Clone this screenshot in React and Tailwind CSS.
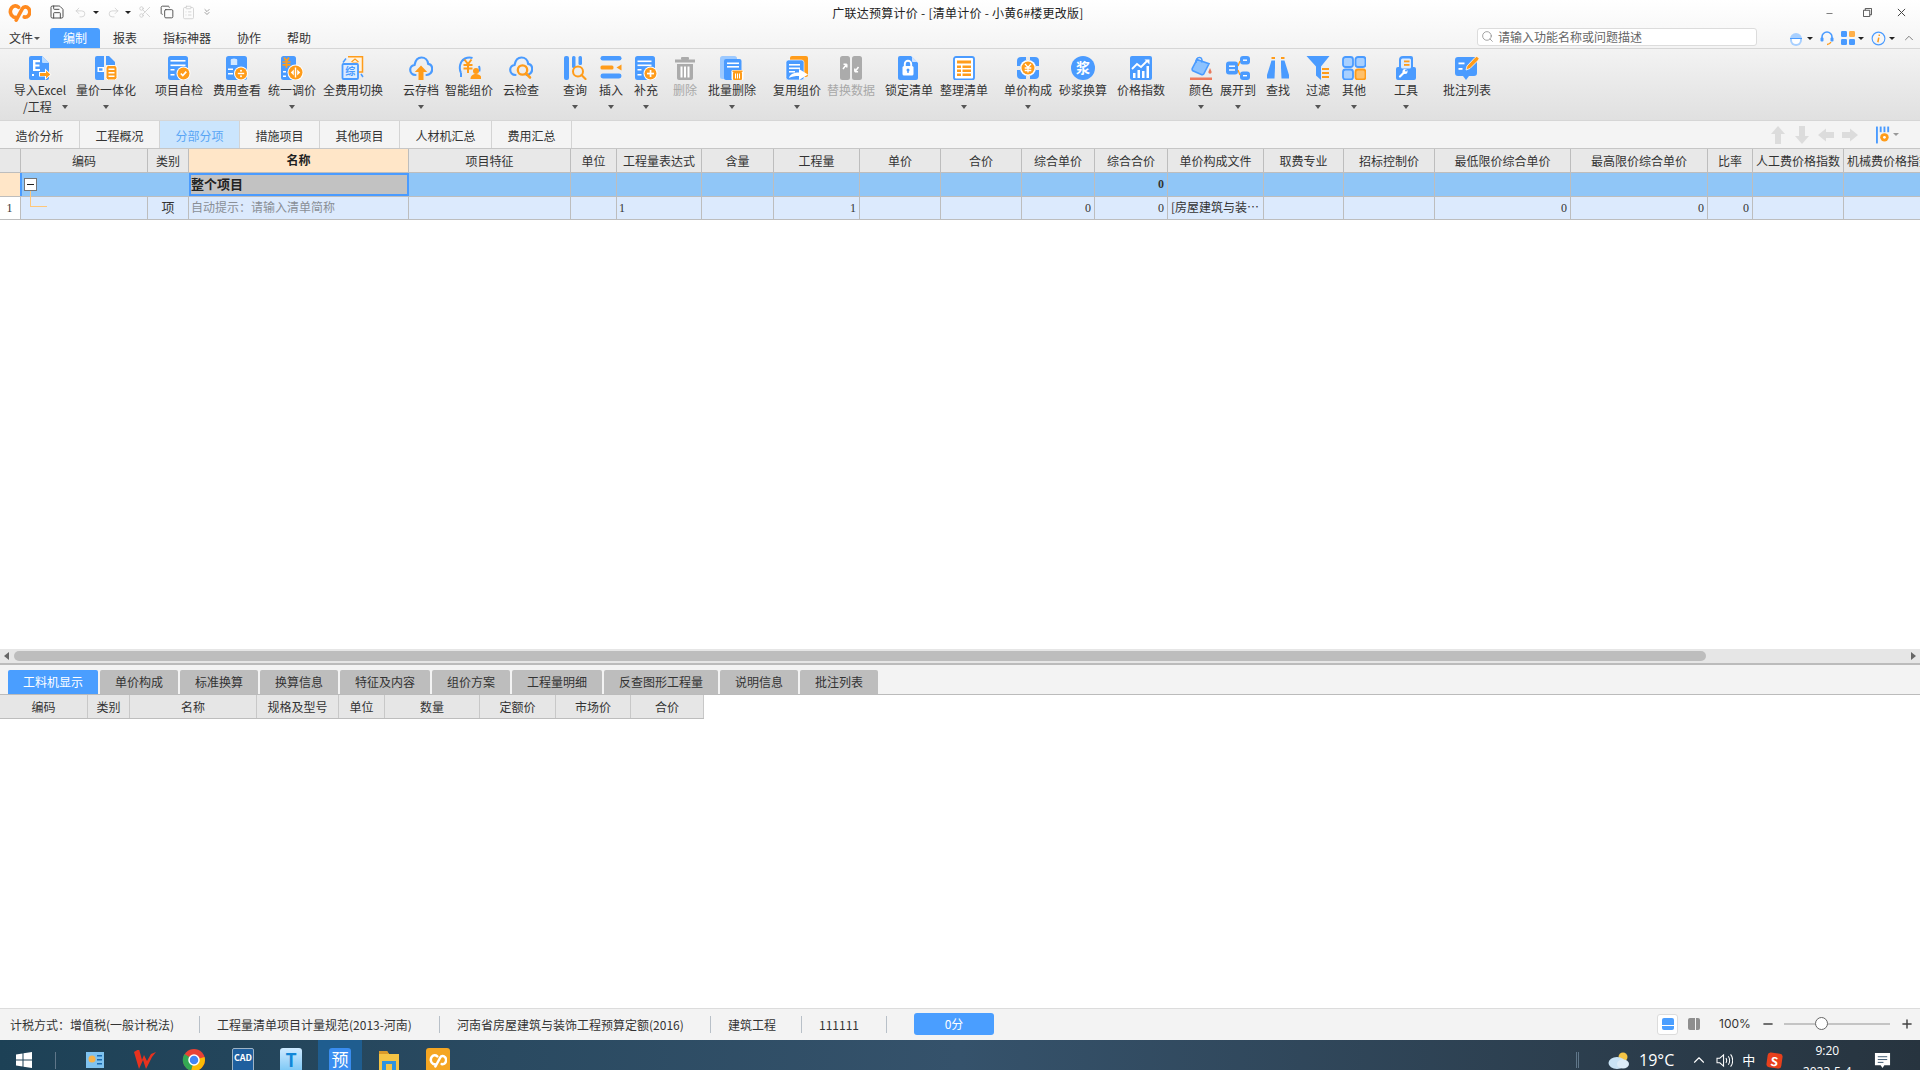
import React from 'react';
import { Save, Undo2, Redo2, Scissors, Copy, ClipboardList, ChevronsDown, Search, ChevronUp, Minus, Plus } from 'lucide-react';

const B = '#4a9bff';
const O = '#ff9c1a';
const W = '#ffffff';
const G = '#ababab';

function Lines({ x = 4, y = 5, w = 12, n = 2, c = W, gap = 4 }) {
  return Array.from({ length: n }).map((_, i) => <rect key={i} x={x} y={y + i * gap} width={w} height="1.6" fill={c} />);
}
function Badge({ cx = 17, cy = 18, r = 6, children }) {
  return (
    <g>
      <circle cx={cx} cy={cy} r={r + 1} fill={W} />
      <circle cx={cx} cy={cy} r={r} fill={O} />
      {children}
    </g>
  );
}
const FILE = 'M3 0h11l7 7v15a2 2 0 0 1-2 2H3a2 2 0 0 1-2-2V2a2 2 0 0 1 2-2z';
const CLOUD = 'M6.5 19C3.4 19 1.2 16.6 1.2 13.8c0-2.6 1.9-4.7 4.4-5C6.4 4.5 8.9 1.5 12.5 1.5c3.5 0 6.2 2.8 6.700 6.3 2.400.5 4 2.700 4 5.200 0 3.200-2.500 6-5.700 6';
const LOGO = 'M11 4.500C9 2.500 5.800 2.500 3.800 5 1.500 8 2 12.500 5.500 14.500c.8.4 1.500.5 2.200.5M8.500 18L15 6c1.300-2.300 4.600-2.600 6.500-.3 2.300 3 1.500 7.300-1.700 8.800-1 .4-1.900.5-2.800.2';

const icons = {
  excel: (<g><path d={FILE} fill={B} /><path d="M14 0l7 7h-6a1 1 0 0 1-1-1z" fill="#bcdcff" /><path d="M5 4h7v2.2H7.400v2.300H11.500v2.100H7.400v2.400H12V15H5z" fill={W} /><path d="M11 16h6v-3.500l6.500 6-6.500 5.500v-3.500h-6z" fill={W} /><path d="M12 17h6v-2.500l4.300 4-4.300 3.700V20h-6z" fill={O} /><rect x="4" y="18" width="2" height="2" fill={W} /></g>),
  liang: (<g><path d="M3 0h7v24H3a2 2 0 0 1-2-2V2a2 2 0 0 1 2-2z" fill={B} /><path d="M12 0h3l6 6v3h-9z" fill={B} /><rect x="3.500" y="11" width="6.500" height="5" fill={W} /><rect x="5" y="12.300" width="3.500" height="2.400" fill={B} /><rect x="12" y="9.500" width="11" height="14.500" rx="2.500" fill={O} stroke={W} strokeWidth="1" /><rect x="14.500" y="12.500" width="6" height="1.500" fill={W} /><rect x="14.500" y="16" width="6" height="1.500" fill={W} /><rect x="14.500" y="19.500" width="6" height="1.500" fill={W} /></g>),
  check: (<g><rect x="1" y="0" width="20" height="24" rx="2.500" fill={B} /><Lines x={3.5} y={4} w={15} n={2} gap={4.5} /><rect x="3.500" y="13" width="4" height="1.500" fill={W} /><rect x="3.500" y="18" width="4" height="1.500" fill={W} /><Badge cx={16.5} cy={17.5}><path d="M13.800 17.500l2 2 3.500-3.800" stroke={W} strokeWidth="1.700" fill="none" /></Badge></g>),
  fee: (<g><rect x="1" y="0" width="21" height="24" rx="2.500" fill={B} /><ellipse cx="9" cy="4" rx="3.200" ry="1.500" fill="#d4e8ff" /><rect x="5.800" y="4" width="6.400" height="5" fill="#d4e8ff" /><rect x="3" y="12.500" width="5" height="1.500" fill={W} /><rect x="3" y="17" width="5" height="1.500" fill={W} /><Badge cx={16} cy={17.5}><rect x="12.800" y="16.800" width="6.400" height="1.400" fill={W} /><circle cx="16" cy="14.800" r="1" fill={W} /><circle cx="16" cy="20.200" r="1" fill={W} /></Badge></g>),
  tong: (<g><rect x="1" y="0" width="15" height="24" rx="2.500" fill={B} /><path d="M4 1.500l2.500 3.500 2.500-3.500M2.500 6h8M2.500 8.800h8M6.500 5v7" stroke={O} strokeWidth="1.700" fill="none" /><rect x="3" y="15" width="3" height="1.500" fill={W} /><rect x="3" y="19.500" width="3" height="1.500" fill={W} /><Badge cx={15.5} cy={16.5} r={7}><rect x="14.800" y="11.500" width="1.400" height="10" fill={W} /><path d="M13.800 13.500v6l-3-3zM17.200 13.500v6l3-3z" fill={W} /></Badge></g>),
  quan: (<g><path d="M7 .8h14.500V16H14" fill="#fff3df" stroke={O} strokeWidth="1.500" /><path d="M10.500 6l3.500-3 3.500 3M11.500 7h5M12 9h4" stroke={O} strokeWidth="1.200" fill="none" /><rect x="1.500" y="8" width="15.500" height="15" rx="1" fill="#dcecff" stroke={B} strokeWidth="1.800" /><text x="9.200" y="19" fontSize="10" fontWeight="700" fill={B} textAnchor="middle" fontFamily="Noto Sans CJK SC">综</text><path d="M2 6.500l3-4M20 18l2 3" stroke={B} strokeWidth="1.500" /></g>),
  cloudup: (<g><path d={CLOUD} fill="none" stroke={B} strokeWidth="2.200" strokeLinecap="round" /><path d="M12 9.500l6.200 6.500h-3.700v8h-5v-8H5.800z" fill={O} /></g>),
  smart: (<g><path d="M4 17C1.500 12 3 5 8 2.500 10 1.500 13 1 15.500 2M22 10c.7 2 .7 4 .2 5.500" fill="none" stroke={B} strokeWidth="2" /><path d="M4 17v4M8 4l-3 0" stroke={B} strokeWidth="2" /><path d="M7.500 3.500L11 8l3.500-4.500M6.500 9h9M6.500 12.500h9M11 8v9" stroke={O} strokeWidth="2" fill="none" /><circle cx="19" cy="15" r="3" fill={O} /><path d="M13.500 23c0-3.500 2.500-5 5.500-5s5.500 1.500 5.500 5z" fill={O} /></g>),
  cloudq: (<g><path d={CLOUD} fill="none" stroke={B} strokeWidth="2.200" strokeLinecap="round" /><circle cx="13.500" cy="14" r="4.700" fill="none" stroke={O} strokeWidth="2.300" /><path d="M17 17.500l4 4" stroke={O} strokeWidth="2.500" strokeLinecap="round" /></g>),
  query: (<g><rect x="1" y="0" width="5" height="24" rx="2" fill={B} /><rect x="9" y="0" width="3.500" height="12" rx="1.500" fill={B} /><rect x="15.500" y="0" width="3.500" height="9" rx="1.500" fill={B} /><circle cx="15" cy="15.500" r="5" fill="none" stroke={O} strokeWidth="2" /><path d="M18.500 19l4 4" stroke={O} strokeWidth="2.200" strokeLinecap="round" /></g>),
  insert: (<g><rect x="1.500" y="0" width="21" height="4.500" rx="2.200" fill={B} /><rect x="1.500" y="9.500" width="13" height="4" rx="1.500" fill={O} /><path d="M22.500 8.500v6l-5-3z" fill={O} /><rect x="1.500" y="17.500" width="21" height="5" rx="2.400" fill={B} /></g>),
  add: (<g><rect x="1" y="0" width="20" height="24" rx="2.500" fill={B} /><Lines x={3.5} y={4.5} w={14} n={2} gap={4} /><rect x="3.500" y="13" width="4" height="1.500" fill={W} /><rect x="3.500" y="18" width="4" height="1.500" fill={W} /><Badge cx={16.5} cy={17.5}><rect x="13" y="16.700" width="7" height="1.700" fill={W} /><rect x="15.700" y="14" width="1.700" height="7" fill={W} /></Badge></g>),
  trash: (<g><path d="M2 3.500h20v3H2z" fill={G} /><rect x="8" y="1" width="8" height="3" rx="1" fill={G} /><path d="M4 8h16v14a2 2 0 0 1-2 2H6a2 2 0 0 1-2-2z" fill={G} /><rect x="7.500" y="10.500" width="2" height="11" fill={W} /><rect x="11" y="10.500" width="2" height="11" fill={W} /><rect x="14.500" y="10.500" width="2" height="11" fill={W} /></g>),
  batch: (<g><rect x="0" y="0" width="17" height="23" rx="2.500" fill="#9cc9ff" /><rect x="4" y="3" width="17.500" height="21" rx="2" fill={B} /><Lines x={7} y={6.5} w={12} n={2} gap={3.5} /><rect x="11.500" y="14" width="12" height="10" rx="1.200" fill={W} /><rect x="13" y="16" width="9" height="8" rx="1" fill={O} /><rect x="12.500" y="14.500" width="10" height="1.500" fill={O} /><rect x="15" y="17.500" width="1" height="5" fill={W} /><rect x="17" y="17.500" width="1" height="5" fill={W} /><rect x="19" y="17.500" width="1" height="5" fill={W} /></g>),
  reuse: (<g><rect x="5" y="0" width="18" height="21" rx="2" fill={O} /><rect x="1" y="4" width="18" height="20" rx="2.500" fill={B} stroke={W} strokeWidth=".6" /><Lines x={4} y={8} w={11} n={2} gap={3.5} /><rect x="4" y="15" width="6" height="1.500" fill={W} /><path d="M4 22c1-4 5-5.500 10-5.500V13l9 5.500-9 5.500v-4c-4 0-7 .5-10 2z" fill={W} /></g>),
  replace: (<g><rect x="1" y="0" width="10" height="24" rx="2.500" fill={G} /><rect x="13" y="0" width="10" height="24" rx="2.500" fill={G} /><path d="M4 13l3-4M7.800 8.200v3.300M7.800 8.200H4.500" stroke={W} strokeWidth="1.500" fill="none" /><path d="M19.500 11l-3 4M15.800 15.800v-3.300M15.800 15.800h3.300" stroke={W} strokeWidth="1.500" fill="none" /></g>),
  lock: (<g><path d={FILE} fill={B} /><path d="M15 .5l5.500 5.500H16a1 1 0 0 1-1-1z" fill="#cfe3ff" /><rect x="5.500" y="10" width="11" height="9.500" rx="1.500" fill={W} /><path d="M7.800 10V8a3.200 3.200 0 0 1 6.400 0v2" fill="none" stroke={W} strokeWidth="1.900" /><circle cx="11" cy="14" r="1.500" fill={B} /><rect x="10.300" y="14" width="1.400" height="3" fill={B} /></g>),
  organize: (<g><rect x="2" y="1" width="20" height="22.500" rx="2" fill={W} stroke={B} strokeWidth="1.900" /><rect x="5" y="4.500" width="14" height="3" fill={O} /><rect x="5" y="9.500" width="4" height="2.500" fill={O} /><rect x="10.500" y="9.500" width="8.500" height="2.500" fill={O} /><rect x="5" y="13.500" width="4" height="2.500" fill={O} /><rect x="10.500" y="13.500" width="8.500" height="2.500" fill={O} /><rect x="5" y="17.500" width="4" height="2.500" fill={O} /><rect x="10.500" y="17.500" width="8.500" height="2.500" fill={O} /></g>),
  unit: (<g><rect x="1" y="1" width="22" height="22" rx="4" fill={B} /><path d="M10 1h4v3h-4zM1 10h3v4H1zM20 10h3v4h-3zM10 20h4v3h-4z" fill="#eaeaea" /><circle cx="12" cy="12" r="8" fill={W} /><circle cx="12" cy="12" r="6.500" fill={O} /><path d="M9 7.800l3 3.700 3-3.700M8.700 12h6.600M8.700 14.500h6.600M12 11.500v5" stroke={W} strokeWidth="1.300" fill="none" /></g>),
  mortar: (<g><circle cx="12" cy="12" r="12" fill={B} /><text x="12" y="17" fontSize="14" fontWeight="700" fill={W} textAnchor="middle" fontFamily="Noto Sans CJK SC">浆</text></g>),
  price: (<g><rect x="1" y="0" width="22" height="24" rx="2" fill={B} /><path d="M3 13l5-5 4 3 6-6" fill="none" stroke={W} strokeWidth="1.800" /><path d="M15.500 3.500h5v5z" fill={W} /><rect x="4" y="17" width="2.500" height="5" fill={W} /><rect x="8.500" y="14" width="2.500" height="8" fill={W} /><rect x="13" y="15" width="2.500" height="7" fill={W} /><rect x="17.500" y="10" width="2.500" height="12" fill={W} /></g>),
  color: (<g><path d="M8 3.500L20 7.800 15 17.500a2 2 0 0 1-2.700 1L4.300 15a2 2 0 0 1-1-2.700z" fill="#8cc2ff" stroke={B} strokeWidth="1.600" /><path d="M7 7c-.5-3 1-5.500 3.500-5.500s3 3 2 5" fill="none" stroke={B} strokeWidth="1.500" /><path d="M21 12l1.500 3.500a1.600 1.600 0 1 1-3 0z" fill="#e87b5e" /><rect x="1" y="21.500" width="22" height="2.500" fill="#ee7a5c" /></g>),
  expand: (<g><rect x="0" y="5.500" width="12" height="13" rx="3" fill={B} /><rect x="3" y="9.500" width="6" height="1.400" fill={W} /><rect x="3" y="13.300" width="6" height="1.400" fill={W} /><rect x="14" y="0" width="10" height="8.500" rx="3" fill={B} /><rect x="17" y="3.500" width="4" height="1.400" fill={W} /><rect x="14" y="15.500" width="10" height="8.500" rx="3" fill={B} /><rect x="17" y="19" width="4" height="1.400" fill={W} /><path d="M12 10l2-5M12 14l2 5" stroke={O} strokeWidth="1.300" /></g>),
  find: (<g><rect x="5.500" y="1" width="3.500" height="2" fill={O} /><rect x="15" y="1" width="3.500" height="2" fill={O} /><path d="M5.500 4.500H9V12L8.500 22.500H1V19z" fill={B} /><path d="M15 4.500h3.500L23 19v3.500h-7.500L15 12z" fill={B} /></g>),
  filter: (<g><path d="M.5 0h23l-8.500 10.500V24l-5-4.500v-9z" fill={B} /><rect x="16" y="12" width="7" height="2" fill={O} /><rect x="16" y="16" width="7" height="2" fill={O} /><rect x="16" y="20" width="7" height="2" fill={O} /></g>),
  other: (<g><rect x="1" y="1" width="10" height="10" rx="2.500" fill="#a8d0ff" stroke={B} strokeWidth="1.800" /><rect x="13.500" y="1" width="10" height="10" rx="2.500" fill="#a8d0ff" stroke={B} strokeWidth="1.800" /><rect x="1" y="13.500" width="10" height="10" rx="2.500" fill="#a8d0ff" stroke={B} strokeWidth="1.800" /><rect x="13.500" y="13.500" width="10" height="10" rx="2.500" fill="#ffc06a" stroke={O} strokeWidth="1.800" /></g>),
  tool: (<g><path d="M9 0h8a2 2 0 0 1 2 2v9h1a2 2 0 0 1 2 2v9a2 2 0 0 1-2 2H4a2 2 0 0 1-2-2V13a2 2 0 0 1 2-2h1V4a4 4 0 0 1 4-4z" fill={B} /><rect x="7" y="2.500" width="10" height="10" rx="1.500" fill="#dcecff" /><rect x="10" y="4.500" width="5.500" height="1.800" fill={O} /><rect x="10" y="8" width="5.500" height="1.800" fill={O} /><path d="M6 20.500l4-4" stroke={W} strokeWidth="2.200" strokeLinecap="round" /><circle cx="11" cy="15.500" r="2.500" fill={W} /><circle cx="12" cy="14.500" r="1" fill={B} /></g>),
  note: (<g><path d="M3 1h16a3 3 0 0 1 3 3v13a3 3 0 0 1-3 3h-5l-3 4-3-4H3a3 3 0 0 1-3-3V4a3 3 0 0 1 3-3z" fill={B} /><rect x="3.500" y="6.500" width="6" height="1.800" fill={W} /><rect x="3.500" y="12" width="4" height="1.800" fill={W} /><path d="M11 14l1-4L20 1.500a1.800 1.800 0 0 1 3.500 2.500L15 12.500z" fill={O} stroke={W} strokeWidth=".8" /></g>),
};

function Ico({ name }) {
  return <svg viewBox="0 0 24 24" className="w-[24px] h-[24px] block">{icons[name]}</svg>;
}
function Caret({ className = '' }) {
  return <span className={`block w-0 h-0 border-x-[3px] border-x-transparent border-t-[4px] border-t-[#555] ${className}`} />;
}

const tools = [
  { i: 'excel', t: '导入Excel', c: 'w-[60px] ml-[10px]', sub: '/工程', caret: 1 },
  { i: 'liang', t: '量价一体化', c: 'w-[62px] ml-[5px]', caret: 1 },
  { i: 'check', t: '项目自检', c: 'w-[50px] ml-[17px]' },
  { i: 'fee', t: '费用查看', c: 'w-[50px] ml-[8px]' },
  { i: 'tong', t: '统一调价', c: 'w-[50px] ml-[5px]', caret: 1 },
  { i: 'quan', t: '全费用切换', c: 'w-[62px] ml-[5px]' },
  { i: 'cloudup', t: '云存档', c: 'w-[38px] ml-[18px]', caret: 1 },
  { i: 'smart', t: '智能组价', c: 'w-[50px] ml-[4px]' },
  { i: 'cloudq', t: '云检查', c: 'w-[38px] ml-[8px]' },
  { i: 'query', t: '查询', c: 'w-[28px] ml-[21px]', caret: 1 },
  { i: 'insert', t: '插入', c: 'w-[28px] ml-[8px]', caret: 1 },
  { i: 'add', t: '补充', c: 'w-[28px] ml-[7px]', caret: 1 },
  { i: 'trash', t: '删除', c: 'w-[28px] ml-[11px]', dim: 1 },
  { i: 'batch', t: '批量删除', c: 'w-[50px] ml-[8px]', caret: 1 },
  { i: 'reuse', t: '复用组价', c: 'w-[50px] ml-[15px]', caret: 1 },
  { i: 'replace', t: '替换数据', c: 'w-[50px] ml-[4px]', dim: 1 },
  { i: 'lock', t: '锁定清单', c: 'w-[50px] ml-[8px]' },
  { i: 'organize', t: '整理清单', c: 'w-[50px] ml-[5px]', caret: 1 },
  { i: 'unit', t: '单价构成', c: 'w-[50px] ml-[14px]', caret: 1 },
  { i: 'mortar', t: '砂浆换算', c: 'w-[50px] ml-[5px]' },
  { i: 'price', t: '价格指数', c: 'w-[50px] ml-[8px]' },
  { i: 'color', t: '颜色', c: 'w-[28px] ml-[21px]', caret: 1 },
  { i: 'expand', t: '展开到', c: 'w-[38px] ml-[4px]', caret: 1 },
  { i: 'find', t: '查找', c: 'w-[28px] ml-[7px]' },
  { i: 'filter', t: '过滤', c: 'w-[28px] ml-[12px]', caret: 1 },
  { i: 'other', t: '其他', c: 'w-[28px] ml-[8px]', caret: 1 },
  { i: 'tool', t: '工具', c: 'w-[28px] ml-[24px]', caret: 1 },
  { i: 'note', t: '批注列表', c: 'w-[50px] ml-[22px]' },
];

const cols = [
  { w: 'w-[21px]', h: '' },
  { w: 'w-[127px]', h: '编码' },
  { w: 'w-[41px]', h: '类别' },
  { w: 'w-[220px]', h: '名称' },
  { w: 'w-[162px]', h: '项目特征' },
  { w: 'w-[46px]', h: '单位' },
  { w: 'w-[85px]', h: '工程量表达式' },
  { w: 'w-[72px]', h: '含量' },
  { w: 'w-[86px]', h: '工程量' },
  { w: 'w-[81px]', h: '单价' },
  { w: 'w-[81px]', h: '合价' },
  { w: 'w-[73px]', h: '综合单价' },
  { w: 'w-[73px]', h: '综合合价' },
  { w: 'w-[96px]', h: '单价构成文件' },
  { w: 'w-[80px]', h: '取费专业' },
  { w: 'w-[91px]', h: '招标控制价' },
  { w: 'w-[136px]', h: '最低限价综合单价' },
  { w: 'w-[137px]', h: '最高限价综合单价' },
  { w: 'w-[45px]', h: '比率' },
  { w: 'w-[91px]', h: '人工费价格指数' },
  { w: 'w-[91px]', h: '机械费价格指数' },
];

const subCols = [
  ['w-[88px]', '编码'], ['w-[42px]', '类别'], ['w-[127px]', '名称'], ['w-[82px]', '规格及型号'], ['w-[46px]', '单位'],
  ['w-[95px]', '数量'], ['w-[76px]', '定额价'], ['w-[75px]', '市场价'], ['w-[73px]', '合价'],
];

const row2 = { 8: '1', 11: '0', 12: '0', 16: '0', 17: '0', 18: '0' };
const mono = "font-[family-name:'Liberation_Serif',serif]";

const topTabs = [['造价分析', 'w-[80px]'], ['工程概况', 'w-[80px]'], ['分部分项', 'w-[80px]'], ['措施项目', 'w-[80px]'], ['其他项目', 'w-[80px]'], ['人材机汇总', 'w-[92px]'], ['费用汇总', 'w-[80px]']];
const botTabs = [['工料机显示', 'w-[90px]'], ['单价构成', 'w-[78px]'], ['标准换算', 'w-[78px]'], ['换算信息', 'w-[78px]'], ['特征及内容', 'w-[90px]'], ['组价方案', 'w-[78px]'], ['工程量明细', 'w-[90px]'], ['反查图形工程量', 'w-[114px]'], ['说明信息', 'w-[78px]'], ['批注列表', 'w-[78px]']];

function MiniCaret({ c = 'border-t-[#222]' }) {
  return <span className={`block w-0 h-0 border-x-[3px] border-x-transparent border-t-[3px] ${c}`} />;
}

export default function App() {
  return (
    <div className="w-[1920px] h-[1070px] overflow-hidden flex flex-col bg-white text-[12px] text-[#333] font-[family-name:'Noto_Sans_CJK_SC','Liberation_Sans',sans-serif]">
      {/* title bar */}
      <div className="h-[48px] shrink-0 bg-gradient-to-b from-white to-[#f4f4f4] flex flex-col">
        <div className="h-[28px] pb-[4px] flex items-center relative">
          <svg viewBox="0 0 24 20" className="w-[23px] h-[19px] ml-[8px]">
            <path d={LOGO} fill="none" stroke="#ff8a1f" strokeWidth="3.800" strokeLinecap="round" />
          </svg>
          <Save size={16} strokeWidth={1.4} className="ml-[18px] text-[#444]" />
          <Undo2 size={13} strokeWidth={1.4} className="ml-[9px] text-[#ccc]" />
          <span className="ml-[6px]"><MiniCaret /></span>
          <Redo2 size={13} strokeWidth={1.4} className="ml-[8px] text-[#ccc]" />
          <span className="ml-[5px]"><MiniCaret /></span>
          <Scissors size={14} strokeWidth={1.4} className="ml-[7px] text-[#ccc]" />
          <Copy size={14} strokeWidth={1.5} className="ml-[8px] text-[#444]" />
          <ClipboardList size={15} strokeWidth={1.3} className="ml-[7px] text-[#ccc]" />
          <ChevronsDown size={10} strokeWidth={1.5} className="ml-[6px] text-[#666]" />
          <div className="absolute left-[821px] top-[3px] w-[274px] text-center leading-[20px] whitespace-nowrap text-[#222] tracking-[0.25px]">广联达预算计价 - [清单计价 - 小黄6#楼更改版]</div>
          <div className="ml-auto flex items-center text-[#333]">
            <Minus size={9} strokeWidth={2} className="mr-[29px] mt-[2px] text-[#555]" />
            <svg viewBox="0 0 10 10" className="w-[9px] h-[9px] mr-[25px] text-[#444]"><path d="M2.500 2.500V.5h7v7h-2M.5 2.500h7v7h-7z" fill="none" stroke="currentColor" /></svg>
            <svg viewBox="0 0 10 10" className="w-[9px] h-[9px] mr-[14px] text-[#444]"><path d="M1 1l8 8M9 1l-8 8" stroke="currentColor" strokeWidth="1.100" /></svg>
          </div>
        </div>
        <div className="h-[20px] flex items-stretch relative text-[12px]">
          <div className="ml-[9px] w-[41px] flex items-center">文件<span className="ml-[1px]"><MiniCaret c="border-t-[#555]" /></span></div>
          <div className="w-[50px] flex items-center justify-center bg-[#4a9eff] text-white rounded-t-[3px]">编制</div>
          <div className="ml-[13px] w-[24px] flex items-center justify-center">报表</div>
          <div className="ml-[26px] w-[48px] flex items-center justify-center">指标神器</div>
          <div className="ml-[26px] w-[24px] flex items-center justify-center">协作</div>
          <div className="ml-[26px] w-[24px] flex items-center justify-center">帮助</div>
          <div className="ml-auto flex items-center mr-[4px]">
            <div className="w-[280px] h-[18px] mr-[31px] mb-[3px] bg-white border border-[#dcdcdc] rounded-[3px] flex items-center pl-[3px] text-[#666]">
              <Search size={13} strokeWidth={1.4} className="text-[#888]" />
              <span className="ml-[4px]">请输入功能名称或问题描述</span>
            </div>
            <svg viewBox="0 0 16 16" className="w-[16px] h-[16px]"><path d="M2 9a6 6 0 0 1 12 0v1a5 5 0 0 1-12 0z" fill="#a8d0ff" /><path d="M4 8h8v2a4 4 0 0 1-8 0z" fill="#fff" /><path d="M2 8.500h12" stroke="#4a9bff" /></svg>
            <span className="ml-[3px]"><MiniCaret /></span>
            <svg viewBox="0 0 16 16" className="w-[16px] h-[16px] ml-[6px]"><path d="M3 9V7a5 5 0 0 1 10 0v2" fill="none" stroke="#4a9bff" strokeWidth="1.600" /><rect x="1.500" y="7.500" width="3" height="4" rx="1" fill="#4a9bff" /><rect x="11.500" y="7.500" width="3" height="4" rx="1" fill="#4a9bff" /><path d="M12 12c-1 2-2 2.500-4 2.500" fill="none" stroke="#ff9c1a" strokeWidth="1.300" /></svg>
            <svg viewBox="0 0 14 14" className="w-[14px] h-[14px] ml-[6px]"><rect x="0" y="0" width="6" height="6" rx="1.200" fill="#4a9bff" /><rect x="8" y="0" width="6" height="6" rx="1.200" fill="#ffb04a" /><rect x="0" y="8" width="6" height="6" rx="1.200" fill="#4a9bff" /><rect x="8" y="8" width="6" height="6" rx="1.200" fill="#4a9bff" /></svg>
            <span className="ml-[3px]"><MiniCaret /></span>
            <svg viewBox="0 0 16 16" className="w-[15px] h-[15px] ml-[7px]"><circle cx="8" cy="8" r="6.800" fill="none" stroke="#4a9bff" strokeWidth="1.200" /><path d="M8.800 3.800v1.500M8.300 7L7.300 12" stroke="#ff9c1a" strokeWidth="1.600" /></svg>
            <span className="ml-[3px]"><MiniCaret /></span>
            <ChevronUp size={14} strokeWidth={1.6} className="ml-[7px] text-[#777]" />
          </div>
        </div>
      </div>

      {/* toolbar */}
      <div className="h-[73px] shrink-0 bg-gradient-to-b from-[#f3f3f3] to-[#e0e0e0] border-y border-[#d6d6d6] flex items-start pt-[7px]">
        {tools.map((x) => (
          <div key={x.t} className={`${x.c} shrink-0 flex flex-col items-center`}>
            <Ico name={x.i} />
            <div className={`mt-[1px] leading-[18px] whitespace-nowrap ${x.dim ? 'text-[#a8a8a8]' : 'text-[#333]'}`}>{x.t}</div>
            {x.sub ? (
              <div className="self-start pl-[13px] -mt-[1px] leading-[18px] flex items-center whitespace-nowrap">{x.sub}<Caret className="ml-[10px]" /></div>
            ) : x.caret ? (
              <Caret className="mt-[6px]" />
            ) : null}
          </div>
        ))}
      </div>

      {/* top tabs */}
      <div className="h-[27px] shrink-0 bg-[#f4f4f4] flex items-stretch">
        {topTabs.map(([t, w]) => (
          <div key={t} className={`${w} flex items-center justify-center pt-[2px] border-r border-[#d4d4d4] ${t === '分部分项' ? 'bg-[#cbe5fd] text-[#5aa5f5]' : ''}`}>{t}</div>
        ))}
        <div className="ml-auto flex items-center">
          <svg viewBox="0 0 14 18" className="w-[14px] h-[18px] mr-[10px]"><path d="M7 0l7 8H10v10H4V8H0z" fill="#dcdcdc" /></svg>
          <svg viewBox="0 0 14 18" className="w-[14px] h-[18px] mr-[9px]"><path d="M7 18l7-8H10V0H4v10H0z" fill="#dcdcdc" /></svg>
          <svg viewBox="0 0 16 14" className="w-[16px] h-[14px] mr-[8px]"><path d="M0 7l8-6.500V4h8v6H8v3.500z" fill="#dcdcdc" /></svg>
          <svg viewBox="0 0 16 14" className="w-[16px] h-[14px] mr-[18px]"><path d="M16 7L8 .5V4H0v6h8v3.500z" fill="#dcdcdc" /></svg>
          <svg viewBox="0 0 16 18" className="w-[15px] h-[18px]"><rect x="0" y="0" width="2" height="18" fill="#4a9bff" /><rect x="4" y="0" width="2" height="6" fill="#4a9bff" /><rect x="8" y="0" width="2" height="6" fill="#4a9bff" /><rect x="12" y="0" width="2" height="6" fill="#4a9bff" /><circle cx="9" cy="11.500" r="4.500" fill="#ff9c1a" /><circle cx="9" cy="11.500" r="1.500" fill="#fff" /></svg>
          <span className="ml-[2px] mr-[21px]"><MiniCaret c="border-t-[#999]" /></span>
        </div>
      </div>

      {/* main table */}
      <div className="shrink-0 border-t border-[#c6c6c6] overflow-hidden text-[#333]">
        <div className="flex h-[24px] border-b border-[#bdbdbd]">
          {cols.map((c, i) => (
            <div key={i} className={`${c.w} shrink-0 border-r border-[#bdbdbd] flex items-center justify-center whitespace-nowrap overflow-hidden ${i === 3 ? 'bg-[#ffe6c8] font-bold text-[#222] pb-[2px]' : 'bg-[#e8e8e8]'}`}>{c.h}</div>
          ))}
        </div>
        <div className="flex h-[24px] border-b border-[#bdbdbd] bg-[#90c6f7]">
          {cols.map((c, i) => {
            if (i === 0) return <div key={i} className="w-[22px] shrink-0 bg-[#ffe6c8] border-r-2 border-[#4a9bff]" />;
            if (i === 1) return (
              <div key={i} className="w-[126px] shrink-0 flex items-center pl-[2px] relative">
                <span className="w-[13px] h-[13px] bg-white border border-[#777] flex items-center justify-center"><span className="block w-[7px] h-[1px] bg-[#222]" /></span>
                <span className="absolute left-[8px] top-[18px] w-[1px] h-[6px] bg-[#ffc77a]" />
              </div>
            );
            if (i === 3) return <div key={i} className={`${c.w} shrink-0 bg-[#c2c2c2] border-2 border-[#4a9bff] flex items-center pb-[2px] font-bold text-[13px] text-[#222]`}>整个项目</div>;
            if (i === 12) return <div key={i} className={`${c.w} shrink-0 border-r border-[#bdbdbd] flex items-center justify-end pr-[3px] pb-[1px] font-bold ${mono}`}>0</div>;
            if (i === 2) return <div key={i} className={`${c.w} shrink-0`} />;
            return <div key={i} className={`${c.w} shrink-0 border-r border-[#bdbdbd]`} />;
          })}
        </div>
        <div className="flex h-[23px] border-b border-[#bdbdbd] bg-[#dceafd]">
          {cols.map((c, i) => {
            if (i === 0) return <div key={i} className={`${c.w} shrink-0 bg-white border-r border-[#bdbdbd] flex items-center justify-center pr-[1px] pb-[1px] ${mono}`}>1</div>;
            if (i === 1) return (
              <div key={i} className={`${c.w} shrink-0 border-r border-[#bdbdbd] pl-[9px]`}>
                <div className="w-[17px] h-[10px] border-l border-b border-[#ffc77a]" />
              </div>
            );
            if (i === 2) return <div key={i} className={`${c.w} shrink-0 border-r border-[#bdbdbd] flex items-center justify-center pb-[2px] text-[13px]`}>项</div>;
            if (i === 3) return <div key={i} className={`${c.w} shrink-0 border-r border-[#bdbdbd] flex items-center pl-[2px] pb-[2px] text-[#8a8f96]`}>自动提示：请输入清单简称</div>;
            if (i === 6) return <div key={i} className={`${c.w} shrink-0 border-r border-[#bdbdbd] flex items-center pl-[2px] pb-[1px] ${mono}`}>1</div>;
            if (i === 13) return <div key={i} className={`${c.w} shrink-0 border-r border-[#bdbdbd] flex items-center pl-[3px] pb-[2px] whitespace-nowrap overflow-hidden`}>[房屋建筑与装…</div>;
            if (row2[i]) return <div key={i} className={`${c.w} shrink-0 border-r border-[#bdbdbd] flex items-center justify-end pr-[3px] pb-[1px] ${mono}`}>{row2[i]}</div>;
            return <div key={i} className={`${c.w} shrink-0 border-r border-[#bdbdbd]`} />;
          })}
        </div>
      </div>

      <div className="h-[429px] shrink-0 bg-white" />

      {/* scrollbar */}
      <div className="h-[14px] shrink-0 bg-[#e6e6e6] flex items-center">
        <span className="ml-[4px] block w-0 h-0 border-y-[4px] border-y-transparent border-r-[5px] border-r-[#666]" />
        <div className="ml-[5px] w-[1692px] h-[10px] rounded-[5px] bg-[#bdbdbd]" />
        <span className="ml-auto mr-[4px] block w-0 h-0 border-y-[4px] border-y-transparent border-l-[5px] border-l-[#666]" />
      </div>

      {/* bottom tabs */}
      <div className="h-[32px] shrink-0 border-t-2 border-[#bbbbbb] border-b bg-[#f3f3f3] border-b-[#bbbbbb] flex items-end pl-[8px] gap-[2px]">
        {botTabs.map(([t, w], i) => (
          <div key={t} className={`${w} h-[24px] flex items-center justify-center rounded-t-[2px] ${i === 0 ? 'bg-[#4a9eff] text-white' : 'bg-[#bdbdbd] text-[#333]'}`}>{t}</div>
        ))}
      </div>

      {/* sub table */}
      <div className="flex h-[24px] w-[704px] shrink-0 border-b border-[#bdbdbd] bg-[#e6e6e6]">
        {subCols.map(([w, t]) => (
          <div key={t} className={`${w} shrink-0 border-r border-[#c8c8c8] flex items-center justify-center whitespace-nowrap`}>{t}</div>
        ))}
      </div>

      <div className="flex-1 bg-white" />

      {/* status */}
      <div className="h-[32px] shrink-0 border-t border-[#dcdcdc] bg-[#f3f3f3] flex items-center">
        <div className="w-[200px] pl-[10px] h-[17px] leading-[17px] border-r border-[#b8c0c8] whitespace-nowrap">计税方式：增值税(一般计税法)</div>
        <div className="w-[240px] pl-[17px] h-[17px] leading-[17px] border-r border-[#b8c0c8] whitespace-nowrap">工程量清单项目计量规范(2013-河南)</div>
        <div className="w-[271px] pl-[17px] h-[17px] leading-[17px] border-r border-[#b8c0c8] whitespace-nowrap">河南省房屋建筑与装饰工程预算定额(2016)</div>
        <div className="w-[91px] pl-[17px] h-[17px] leading-[17px] border-r border-[#b8c0c8] whitespace-nowrap">建筑工程</div>
        <div className="w-[85px] pl-[17px] h-[17px] leading-[17px] border-r border-[#b8c0c8] whitespace-nowrap">111111</div>
        <div className="ml-[27px] mb-[1px] w-[80px] h-[22px] rounded-[3px] bg-[#4a9eff] text-white flex items-center justify-center">0分</div>
        <div className="ml-auto flex items-center mr-[6px] mb-[1px]">
          <div className="w-[21px] h-[21px] rounded-[3px] bg-white border border-[#dcdcdc] flex flex-col items-center justify-center gap-[1px]">
            <span className="block w-[12px] h-[7px] rounded-t-[2px] bg-[#4a9eff]" />
            <span className="block w-[12px] h-[4px] rounded-b-[2px] bg-[#4a9eff]" />
          </div>
          <div className="ml-[10px] flex gap-[1px]">
            <span className="block w-[7px] h-[12px] rounded-l-[2px] bg-[#8e8e8e]" />
            <span className="block w-[4px] h-[12px] rounded-r-[2px] bg-[#8e8e8e]" />
          </div>
          <span className="ml-[19px] w-[32px] text-[#333] font-[family-name:'Inter',sans-serif]">100%</span>
          <Minus size={14} strokeWidth={2.500} className="ml-[10px] text-[#444]" />
          <div className="ml-[9px] w-[106px] h-[2px] bg-[#c4c4c4] relative">
            <span className="absolute left-[31px] top-[-6px] w-[13px] h-[13px] rounded-full bg-white border-[1.5px] border-[#666]" />
          </div>
          <Plus size={14} strokeWidth={2.500} className="ml-[10px] text-[#444]" />
        </div>
      </div>

      {/* taskbar */}
      <div className="h-[30px] shrink-0 bg-gradient-to-r from-[#1d4156] via-[#35526b] to-[#27343f] overflow-hidden text-white">
        <div className="h-[40px] flex items-center">
          <svg viewBox="0 0 16 16" className="w-[16px] h-[16px] ml-[16px]"><path d="M0 2.500L6.500 1.500V7.500H0zM7.500 1.300L16 0V7.500H7.500zM0 8.500H6.500V14.500L0 13.500zM7.500 8.500H16V16L7.500 14.700z" fill="#fff" /></svg>
          <span className="ml-[23px] block w-[1px] h-[17px] bg-[#5f7689]" />
          <svg viewBox="0 0 20 20" className="w-[20px] h-[20px] ml-[29px]"><rect x="1" y="2" width="18" height="16" fill="#7fc3f0" /><circle cx="7" cy="9" r="3.500" fill="#f6b24a" /><rect x="12" y="5" width="5" height="1.500" fill="#1669b0" /><rect x="12" y="9" width="5" height="1.500" fill="#1669b0" /><rect x="12" y="13" width="5" height="1.500" fill="#1669b0" /></svg>
          <svg viewBox="0 0 24 20" className="w-[24px] h-[20px] ml-[28px]"><path d="M1 2l5 17 4-9 3 9 6-12 4-5-5 2-4 7-3-6-2 5-3-11z" fill="#e8321e" /></svg>
          <svg viewBox="0 0 24 24" className="w-[24px] h-[24px] ml-[25px]"><circle cx="12" cy="12" r="11" fill="#e94235" /><path d="M12 12L22.500 9A11 11 0 0 1 9 22.600z" fill="#fbbc05" /><path d="M12 12L9 22.600A11 11 0 0 1 2.500 6z" fill="#34a853" /><circle cx="12" cy="12" r="5" fill="#4285f4" stroke="#fff" strokeWidth="1.500" /></svg>
          <div className="ml-[26px] w-[22px] h-[24px] rounded-[2px] bg-[#1f5f9e] border border-[#9fb4c6] flex items-start justify-center text-[9px] leading-[18px] font-bold">CAD</div>
          <div className="ml-[26px] w-[22px] h-[24px] rounded-[3px] bg-gradient-to-b from-[#cfeaff] to-[#77c6f5] flex items-start justify-center text-[#1287d8] text-[18px] leading-[22px] font-bold">T</div>
          <div className="ml-[16px] w-[44px] h-[40px] bg-[#1f5d8f] flex items-center justify-center">
            <div className="w-[22px] h-[24px] rounded-[3px] bg-[#3a8df0] flex items-start justify-center text-[17px] leading-[22px]">预</div>
          </div>
          <svg viewBox="0 0 22 22" className="w-[22px] h-[22px] ml-[16px]"><path d="M1 2h8l2 3h10v16H1z" fill="#f5c445" /><path d="M1 2h8l2 3H1z" fill="#d99a2b" /><rect x="4" y="12" width="14" height="9" fill="#2f93dd" /><rect x="8" y="15" width="6" height="6" fill="#f5c445" /></svg>
          <div className="ml-[26px] w-[24px] h-[24px] rounded-[3px] bg-[#f5a623] flex items-center justify-center">
            <svg viewBox="0 0 24 20" className="w-[18px] h-[15px]"><path d={LOGO} fill="none" stroke="#fff" strokeWidth="3.400" strokeLinecap="round" /></svg>
          </div>
          <span className="ml-[1126px] block w-[3px] h-[16px] border-x border-[#5f7689]" />
          <svg viewBox="0 0 22 18" className="w-[22px] h-[18px] ml-[29px]"><circle cx="15" cy="6" r="4.500" fill="#f5c445" /><ellipse cx="9" cy="12" rx="8.500" ry="6" fill="#c9e3f6" /><ellipse cx="15" cy="13" rx="6" ry="4.500" fill="#dcecf8" /></svg>
          <span className="ml-[9px] text-[16px] font-[family-name:'Open_Sans',sans-serif]">19°C</span>
          <ChevronUp size={18} strokeWidth={1.5} className="ml-[16px]" />
          <svg viewBox="0 0 18 16" className="w-[17px] h-[15px] ml-[8px]"><path d="M1 5.500h3L8 2v12L4 10.500H1z" fill="none" stroke="#fff" strokeWidth="1.100" /><path d="M10.500 5.500c1 1.500 1 3.500 0 5M13 3.500c2 2.500 2 6.500 0 9M15.500 1.500c3 3.500 3 9.500 0 13" fill="none" stroke="#fff" strokeWidth="1.100" /></svg>
          <span className="ml-[9px] text-[13px]">中</span>
          <div className="ml-[12px] w-[15px] h-[15px] rotate-[8deg] rounded-[3px] bg-[#e8401c] flex items-center justify-center text-[12px] font-bold leading-none">S</div>
          <div className="ml-[10px] w-[70px] h-[40px] flex flex-col items-center text-[12px] leading-[21px] whitespace-nowrap font-[family-name:'Open_Sans',sans-serif]">
            <span>9:20</span>
            <span>2023-5-4</span>
          </div>
          <svg viewBox="0 0 18 18" className="w-[17px] h-[17px] ml-[12px]"><path d="M1 1h16v13h-6l-2 3-2-3H1z" fill="#fff" /><path d="M4 5h10M4 8h10M4 11h6" stroke="#35526b" strokeWidth="1" /></svg>
        </div>
      </div>
    </div>
  );
}
